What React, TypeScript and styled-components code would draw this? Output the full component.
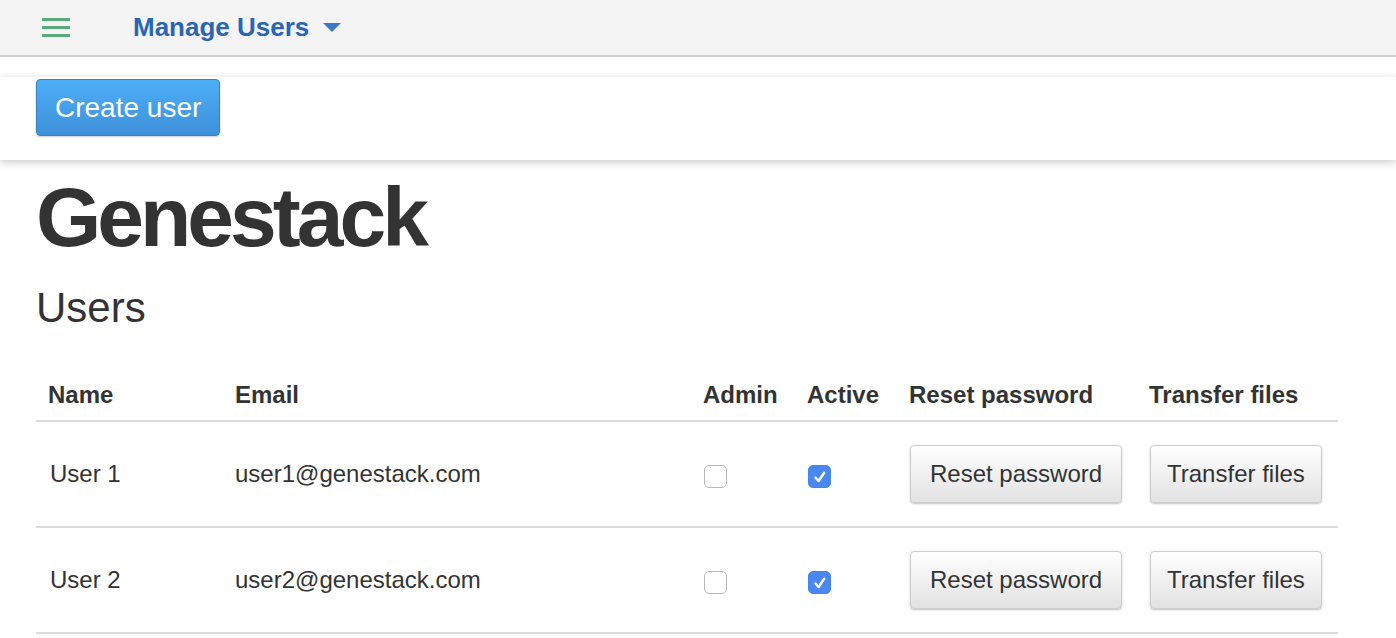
import React from "react";
import styled, { createGlobalStyle } from "styled-components";

const GlobalStyle = createGlobalStyle`
  html, body { margin: 0; padding: 0; background: #fff; }
  body {
    font-family: "Liberation Sans", Arial, Helvetica, sans-serif;
    color: #333;
  }
  * { box-sizing: border-box; }
`;

const TopBar = styled.header`
  height: 57px;
  background: #f4f4f4;
  border-bottom: 2px solid #cfcfcf;
  display: flex;
  align-items: center;
  padding-left: 42px;
`;

const MenuButton = styled.button`
  width: 28px;
  height: 19px;
  padding: 0;
  border: 0;
  background: transparent;
  display: flex;
  flex-direction: column;
  justify-content: space-between;
  margin-right: 63px;
  cursor: pointer;
`;

const MenuLine = styled.span`
  display: block;
  height: 3px;
  width: 100%;
  background: #5aa97b;
`;

const TitleMenu = styled.div`
  display: flex;
  align-items: center;
  gap: 14px;
  color: #2a65b5;
  font-size: 26px;
  font-weight: bold;
  margin-top: -1px;
`;

const Caret = styled.span`
  width: 0;
  height: 0;
  border-left: 9px solid transparent;
  border-right: 9px solid transparent;
  border-top: 9px solid #3a78c8;
  margin-top: 1px;
`;

const ToolPanel = styled.div`
  margin-top: 20px;
  height: 83px;
  padding: 2px 36px 0;
  background: #fff;
  box-shadow: 0 3px 8px rgba(0, 0, 0, 0.18), 0 -1px 6px rgba(0, 0, 0, 0.04);
`;

const PrimaryButton = styled.button`
  height: 57px;
  padding: 1px 18px 0;
  border: 1px solid #3682c6;
  border-radius: 4px;
  background: linear-gradient(#4caef7, #3e91da);
  color: #fff;
  font-family: inherit;
  font-size: 28px;
  box-shadow: 0 1px 2px rgba(0, 0, 0, 0.2);
  cursor: pointer;
`;

const Content = styled.main`
  padding: 0 58px 0 36px;
`;

const Brand = styled.h1`
  margin: 14px 0 0;
  font-size: 84px;
  line-height: 86px;
  font-weight: bold;
  letter-spacing: -4px;
  color: #333;
`;

const SectionTitle = styled.h2`
  margin: 27px 0 0;
  font-size: 42px;
  line-height: 42px;
  font-weight: 300;
  color: #333;
`;

const Table = styled.table`
  margin-top: 36px;
  width: 1302px;
  border-collapse: collapse;
  table-layout: fixed;
`;

const HeadCell = styled.th<{ $w: number }>`
  width: ${(p) => p.$w}px;
  text-align: left;
  font-size: 24px;
  line-height: 34px;
  font-weight: bold;
  color: #333;
  padding: 13px 12px 8px;
  border-bottom: 2px solid #dcdcdc;
  white-space: nowrap;
`;

const Row = styled.tr`
  border-bottom: 2px solid #dcdcdc;
`;

const Cell = styled.td`
  font-size: 24px;
  line-height: 34px;
  color: #333;
  padding: 23px 12px;
  height: 104px;
  vertical-align: middle;
  white-space: nowrap;
`;

const NameText = styled.span`
  margin-left: 2px;
`;

const Check = styled.span<{ $checked: boolean }>`
  display: inline-flex;
  align-items: center;
  justify-content: center;
  width: 23px;
  height: 23px;
  margin: 2px 0 0 1px;
  vertical-align: middle;
  border-radius: 5px;
  border: ${(p) => (p.$checked ? "1px solid #4584ef" : "1.5px solid #b9b9b9")};
  background: ${(p) => (p.$checked ? "#4a87f1" : "#fff")};
`;

const ActionButton = styled.button<{ $pad: number }>`
  height: 58px;
  padding: 0 ${(p) => p.$pad}px;
  margin-left: 1px;
  border: 1px solid #cdcdcd;
  border-radius: 4px;
  background: linear-gradient(#ffffff, #e2e2e2);
  color: #333;
  font-family: inherit;
  font-size: 24px;
  box-shadow: 0 1px 2px rgba(0, 0, 0, 0.25);
  vertical-align: middle;
  cursor: pointer;
`;

const CheckMark = () => (
  <svg width="16" height="16" viewBox="0 0 16 16" aria-hidden>
    <path d="M3.5 8.6 L6.6 12 L12.2 3.8" fill="none" stroke="#fff" strokeWidth="2.4" strokeLinecap="round" strokeLinejoin="round" />
  </svg>
);

const users = [
  { name: "User 1", email: "user1@genestack.com", admin: false, active: true },
  { name: "User 2", email: "user2@genestack.com", admin: false, active: true },
];

export default function App() {
  return (
    <>
      <GlobalStyle />
      <TopBar>
        <MenuButton aria-label="Menu">
          <MenuLine />
          <MenuLine />
          <MenuLine />
        </MenuButton>
        <TitleMenu>
          Manage Users
          <Caret />
        </TitleMenu>
      </TopBar>
      <ToolPanel>
        <PrimaryButton>Create user</PrimaryButton>
      </ToolPanel>
      <Content>
        <Brand>Genestack</Brand>
        <SectionTitle>Users</SectionTitle>
        <Table>
          <thead>
            <tr>
              <HeadCell $w={187}>Name</HeadCell>
              <HeadCell $w={468}>Email</HeadCell>
              <HeadCell $w={104}>Admin</HeadCell>
              <HeadCell $w={102}>Active</HeadCell>
              <HeadCell $w={240}>Reset password</HeadCell>
              <HeadCell $w={201}>Transfer files</HeadCell>
            </tr>
          </thead>
          <tbody>
            {users.map((u) => (
              <Row key={u.email}>
                <Cell><NameText>{u.name}</NameText></Cell>
                <Cell>{u.email}</Cell>
                <Cell>
                  <Check $checked={u.admin}>{u.admin && <CheckMark />}</Check>
                </Cell>
                <Cell>
                  <Check $checked={u.active}>{u.active && <CheckMark />}</Check>
                </Cell>
                <Cell>
                  <ActionButton $pad={19}>Reset password</ActionButton>
                </Cell>
                <Cell>
                  <ActionButton $pad={16}>Transfer files</ActionButton>
                </Cell>
              </Row>
            ))}
          </tbody>
        </Table>
      </Content>
    </>
  );
}
